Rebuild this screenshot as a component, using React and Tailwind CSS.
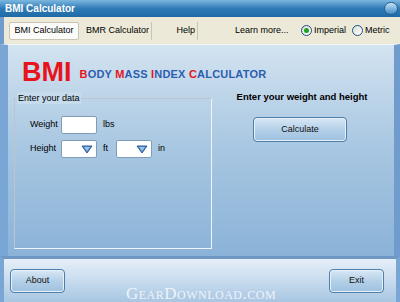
import React from "react";

const font = { fontFamily: "'Liberation Sans', Arial, sans-serif" };

const Combo = () => (
  <div className="w-[36px] h-[18px] bg-white border border-[#7f9db9] rounded-[2px] flex items-center justify-end pr-[3px]">
    <svg width="12" height="9" viewBox="0 0 12 9">
      <path d="M1 1 H11 L6 8 Z" fill="#4a86c5" stroke="#2f5f98" strokeWidth="1" />
      <path d="M3 2 H9 L6 6 Z" fill="#9cc4ea" />
    </svg>
  </div>
);

const Radio = ({ checked, label }) => (
  <div className="flex items-center gap-[2px]">
    <div className="w-[11px] h-[11px] rounded-full border border-[#1c5180] bg-gradient-to-br from-[#dcdcd6] to-white flex items-center justify-center">
      {checked && <div className="w-[5px] h-[5px] rounded-full bg-[#21a121]" />}
    </div>
    <span>{label}</span>
  </div>
);

const SkinButton = ({ children, className }) => (
  <div
    className={`flex items-center justify-center rounded-[4px] border border-[#4f7ea8] bg-gradient-to-b from-[#d9e8f5] via-[#b4d0e8] to-[#9ec0df] shadow-[inset_0_0_0_1px_#e8f1fa] text-[9px] text-[#111] ${className}`}
  >
    {children}
  </div>
);

export default function App() {
  return (
    <div className="w-[400px] h-[302px] overflow-hidden bg-[#ece9d8] flex flex-col text-[9px] text-black whitespace-nowrap" style={font}>
      {/* title bar */}
      <div className="h-[17px] bg-gradient-to-b from-[#7bb7e0] via-[#2f7bb6] to-[#1e6aa6] flex items-center justify-between pl-[5px] pr-[2px]">
        <span className="text-white font-bold text-[10px]">BMI Calculator</span>
        <div className="w-[14px] h-[13px] rounded-full bg-gradient-to-b from-[#c5e3f7] to-[#3d8ac6] border border-[#2a5e8c]" />
      </div>

      {/* toolbar */}
      <div className="h-[27px] bg-[#ece9d8] flex items-center pl-[5px] border-l-[4px] border-[#6f9ccc]">
        <div className="w-[70px] h-[18px] flex items-center justify-center bg-[#fbfbf9] border border-[#c9c5b5] rounded-[2px]">BMI Calculator</div>
        <div className="w-[73px] pl-[7px] border-r border-[#c9c5b5] h-[18px] flex items-center">BMR Calculator</div>
        <div className="w-[46px] justify-end pr-[2px] border-r border-[#c9c5b5] h-[18px] flex items-center">Help</div>
        <div className="w-[103px] pl-[37px] h-[18px] flex items-center">Learn more...</div>
        <div className="w-[51px]">
          <Radio checked label="Imperial" />
        </div>
        <div>
          <Radio label="Metric" />
        </div>
      </div>

      {/* main panel */}
      <div className="h-[212px] flex border-l-[8px] border-[#7aa6d6] border-r-[6px] border-r-[#6f9ccc] bg-gradient-to-b from-[#d3e3f0] via-[#a7c6e1] to-[#8bb3d8] border-t border-t-[#f3f6fa]">
        <div className="flex flex-col flex-1">
          <div className="flex items-end pl-[14px] pt-[13px] h-[38px]">
            <span className="text-[#e8141b] font-bold text-[27px] leading-[22px]">BMI</span>
            <span className="ml-[8px] mb-[1px] text-[11px] font-bold tracking-[0.2px] text-[#2b5fb0]">
              <span className="text-[#e8141b]">B</span>ODY <span className="text-[#e8141b]">M</span>ASS <span className="text-[#e8141b]">I</span>NDEX <span className="text-[#e8141b]">C</span>ALCULATOR
            </span>
          </div>
          <div className="flex mt-[15px]">
            {/* group box */}
            <div className="relative ml-[6px] w-[198px] h-[151px] border border-[#edf4fa] border-t-[#b9c6cf] border-l-[#b9c6cf]">
              <span className="absolute -top-[7px] left-[2px] px-[1px] bg-[#c6dbec] leading-[12px]">Enter your data</span>
              <div className="pl-[15px] pt-[17px] flex flex-col gap-[6px]">
                <div className="flex items-center">
                  <span className="w-[31px]">Weight</span>
                  <div className="w-[36px] h-[18px] bg-white border border-[#7f9db9] rounded-[2px]" />
                  <span className="ml-[6px]">lbs</span>
                </div>
                <div className="flex items-center">
                  <span className="w-[31px]">Height</span>
                  <Combo />
                  <span className="ml-[6px] w-[13px]">ft</span>
                  <Combo />
                  <span className="ml-[6px]">in</span>
                </div>
              </div>
            </div>
            <div className="flex-1 flex flex-col items-center -mt-[8px]">
              <span className="font-bold text-[9.5px] mr-[2px]">Enter your weight and height</span>
              <SkinButton className="mt-[13px] mr-[6px] w-[94px] h-[25px]">Calculate</SkinButton>
            </div>
          </div>
        </div>
      </div>

      {/* bottom bar */}
      <div className="relative flex-1 flex items-center justify-between pl-[6px] pr-[12px] border-l-[4px] border-[#7aa6d6] border-t-[3px] border-t-[#6f98c4] border-r-[4px] border-r-[#7aa6d6] bg-gradient-to-b from-[#e6eff8] via-[#c9dcee] to-[#a8c6e2]">
        <SkinButton className="w-[55px] h-[24px]">About</SkinButton>
        <SkinButton className="w-[55px] h-[24px]">Exit</SkinButton>
        <span className="absolute left-[122px] bottom-[0px] text-[17px] leading-[16px] text-[#eef3f8] tracking-[0.5px]" style={{ fontFamily: "'Liberation Serif', serif", fontVariant: "small-caps" }}>
          GearDownload.com
        </span>
      </div>
    </div>
  );
}
